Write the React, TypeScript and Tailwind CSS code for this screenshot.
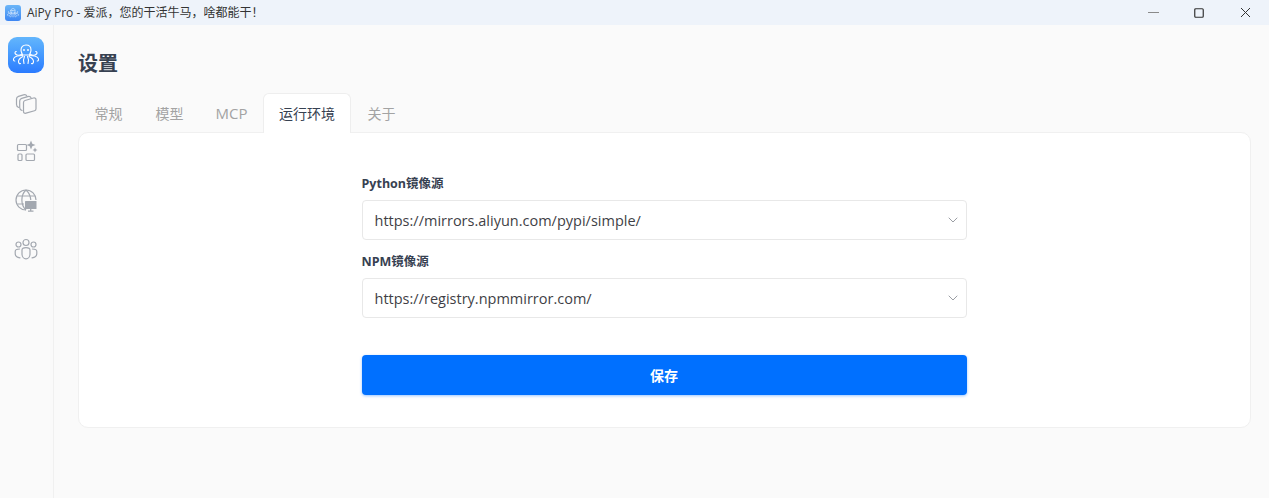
import React from "react";
import { ChevronDown } from "lucide-react";

const FONT = "font-['Open_Sans','Noto_Sans_CJK_SC',sans-serif]";

// octopus mark, used in the title bar and in the sidebar
const Octopus = ({ className }: { className: string }) => (
  <svg viewBox="0 0 36 36" fill="none" stroke="currentColor" strokeWidth="1.1" strokeLinecap="round" className={className}>
    <path d="M13 13c0-3 2-5 5-5s5 2 5 5c0 2-1 3-1.500 5h-7C14 16 13 15 13 13z" />
    <circle cx="16" cy="13" r="0.4" />
    <circle cx="20" cy="13" r="0.4" />
    <path d="M14 17c-2 1.500-5 1.500-6.500 0-1-1-.5-2.500.8-2.500" />
    <path d="M22 17c2 1.500 5 1.500 6.500 0 1-1 .5-2.500-.8-2.500" />
    <path d="M14.500 18.500c-3 0-7 .5-8.500 2.500-1 1.500-.5 3 .8 3" />
    <path d="M21.500 18.500c3 0 7 .5 8.500 2.500 1 1.500.5 3-.8 3" />
    <path d="M15 19.500c-2 1-4.500 2.500-4.500 5 0 1.500 1 2.500 2 2" />
    <path d="M21 19.500c2 1 4.500 2.500 4.500 5 0 1.500-1 2.500-2 2" />
    <path d="M16.500 19.500c-1 2-1.500 4.500-.5 7" />
    <path d="M19.500 19.500c1 2 1.500 4.500.5 7" />
  </svg>
);

const TitleBar = () => (
  <div className="flex h-[25px] items-center justify-between bg-[#eef3fa]">
    <div className="flex items-center">
      <div className="ml-[5px] flex h-4 w-4 items-center justify-center rounded-[3px] bg-gradient-to-b from-[#6cb6f8] to-[#3d86f2] text-white">
        <Octopus className="h-4 w-4" />
      </div>
      <span className="ml-[6px] text-[12px] text-[#333]">AiPy Pro - 爱派，您的干活牛马，啥都能干！</span>
    </div>
    <div className="flex items-center">
      <svg width="11" height="11" viewBox="0 0 11 11" className="mr-[35px] text-[#8a8a8a]">
        <path d="M0 5.500h11" stroke="currentColor" />
      </svg>
      <svg width="10" height="10" viewBox="0 0 10 10" className="mr-[36px] text-[#333]">
        <rect x="0.75" y="0.75" width="8.5" height="8.5" rx="1" fill="none" stroke="currentColor" strokeWidth="1.2" />
      </svg>
      <svg width="11" height="11" viewBox="0 0 11 11" className="mr-[18px] text-[#333]">
        <path d="M1 1l9 9M10 1l-9 9" stroke="currentColor" fill="none" />
      </svg>
    </div>
  </div>
);

const Sidebar = () => (
  <div className="flex w-[54px] shrink-0 flex-col items-center border-r border-[#f0f0f0] bg-[#fafafa] pt-3">
    <div className="mr-[1px] flex h-9 w-9 items-center justify-center rounded-[9px] bg-gradient-to-b from-[#63b6fc] to-[#2b7bff] text-white">
      <Octopus className="h-9 w-9" />
    </div>
    <div className="mt-[19px] flex flex-col items-center gap-6 pr-[1px] text-[#a3a8b0]">
      <svg width="24" height="24" viewBox="0 0 24 24" fill="none" stroke="currentColor" strokeWidth="1.2" strokeLinejoin="round" strokeLinecap="round">
        <path d="M9.500 10.500c0-1 .5-1.700 1.500-2l8.500-2.500c1.500-.4 2.500.5 2.500 1.800v9c0 1-.5 1.700-1.500 2L12 21.200c-1.500.4-2.500-.5-2.500-1.800z" />
        <path d="M8 18.500c-1.500-.5-2.300-1.500-2.300-3V9c0-1.300.7-2.200 2-2.600l6-1.800c1.500-.4 2.800 0 3.300 1.200" />
        <path d="M4.800 15.500C3.300 15 2.500 14 2.500 12.500V7c0-1.300.7-2.200 2-2.600l5-1.500c1.500-.4 2.800 0 3.300 1" />
      </svg>
      <svg width="24" height="24" viewBox="0 0 24 24" fill="none" stroke="currentColor" strokeWidth="1.2">
        <rect x="3.500" y="4.500" width="9" height="6" rx="1" />
        <rect x="4" y="14" width="4" height="6.500" rx="1" />
        <rect x="12" y="14" width="8.500" height="6.500" rx="1" />
        <path d="M17 .5l1.300 3.200L21.500 5l-3.200 1.300L17 9.500l-1.300-3.200L12.500 5l3.200-1.300z" fill="currentColor" stroke="none" />
        <path d="M21 7.500l.8 1.700 1.700.8-1.700.8-.8 1.700-.8-1.700-1.700-.8 1.700-.8z" fill="currentColor" stroke="none" />
      </svg>
      <svg width="24" height="24" viewBox="0 0 24 24" fill="none" stroke="currentColor" strokeWidth="1.2">
        <path d="M12 22a10 10 0 1 1 10-10" />
        <path d="M12 2c-5.500 5-5.500 15 0 20M12 2c3 2.700 4.500 6 4.800 10" />
        <path d="M3.200 8h17.600M3.200 16H10" />
        <rect x="11" y="13" width="11.500" height="8" rx="0.5" fill="currentColor" stroke="none" />
        <path d="M16.700 21v2M14 23.200h5.500" strokeWidth="1.300" />
      </svg>
      <svg width="24" height="24" viewBox="0 0 24 24" fill="none" stroke="currentColor" strokeWidth="1.2" strokeLinecap="round" className="mt-[1px]">
        <circle cx="12" cy="5.500" r="3" />
        <circle cx="4.500" cy="7.500" r="2.500" />
        <circle cx="19.500" cy="7.500" r="2.500" />
        <path d="M8 13c0-1.500 1.500-2.300 4-2.300s4 .8 4 2.300v4c0 2.700-1.800 4.800-4 4.800s-4-2.100-4-4.800z" />
        <path d="M5.500 12c-2.700 0-4.300.8-4.300 2.500v2c0 2.300 2 4 4.800 4.300" />
        <path d="M18.500 12c2.700 0 4.300.8 4.300 2.500v2c0 2.300-2 4-4.800 4.300" />
      </svg>
    </div>
  </div>
);

const Tabs = () => {
  const tabs = [
    { label: "常规", className: "w-[61px] text-[14px]" },
    { label: "模型", className: "w-[61px] text-[14px]" },
    { label: "MCP", className: "w-[63px] text-[15px]" },
    { label: "运行环境", className: "w-[88px] text-[14px]", active: true },
    { label: "关于", className: "w-[61px] text-[14px]" },
  ];
  return (
    <div className="mt-[14px] flex h-[39px]">
      {tabs.map((t) => (
        <div
          key={t.label}
          className={
            t.active
              ? `${t.className} relative z-10 -mb-px flex h-[40px] items-center justify-center rounded-t-md border border-b-0 border-[#eeeeee] bg-white text-[#374151]`
              : `${t.className} flex items-center justify-center pt-[2px] text-[#a3a3a3]`
          }
        >
          {t.label}
        </div>
      ))}
    </div>
  );
};

const Field = ({ label, value }: { label: string; value: string }) => (
  <div>
    <div className="mb-[7px] text-[12.500px] leading-[18px] font-bold text-[#374151]">{label}</div>
    <div className="flex h-[40px] items-center justify-between rounded border border-[#e8e8e8] bg-white pr-[5px] pl-3">
      <span className="pt-[1px] text-[14.500px] text-[#3f3f46]">{value}</span>
      <ChevronDown className="h-4 w-4 text-[#8b8f96]" strokeWidth={1.3} />
    </div>
  </div>
);

export default function App() {
  return (
    <div className={`${FONT} flex h-[498px] w-[1269px] flex-col overflow-hidden bg-[#fafafa]`}>
      <TitleBar />
      <div className="flex flex-1">
        <Sidebar />
        <div className="flex-1 pr-[18px] pl-6">
          <h1 className="mt-[24px] text-[20px] leading-[30px] font-bold text-[#374151]">设置</h1>
          <Tabs />
          <div className="flex h-[296px] justify-center rounded-[10px] border border-[#f0f0f0] bg-white pt-[42px] pr-[1px]">
            <div className="w-[605px]">
              <div className="flex flex-col gap-[13px]">
                <Field label="Python镜像源" value="https://mirrors.aliyun.com/pypi/simple/" />
                <Field label="NPM镜像源" value="https://registry.npmmirror.com/" />
              </div>
              <button className="mt-[37px] flex h-[40px] w-full items-center justify-center rounded bg-[#0070ff] text-[14px] font-bold text-white shadow-[0_1px_3px_rgba(0,112,255,0.4)]">
                保存
              </button>
            </div>
          </div>
        </div>
      </div>
    </div>
  );
}
